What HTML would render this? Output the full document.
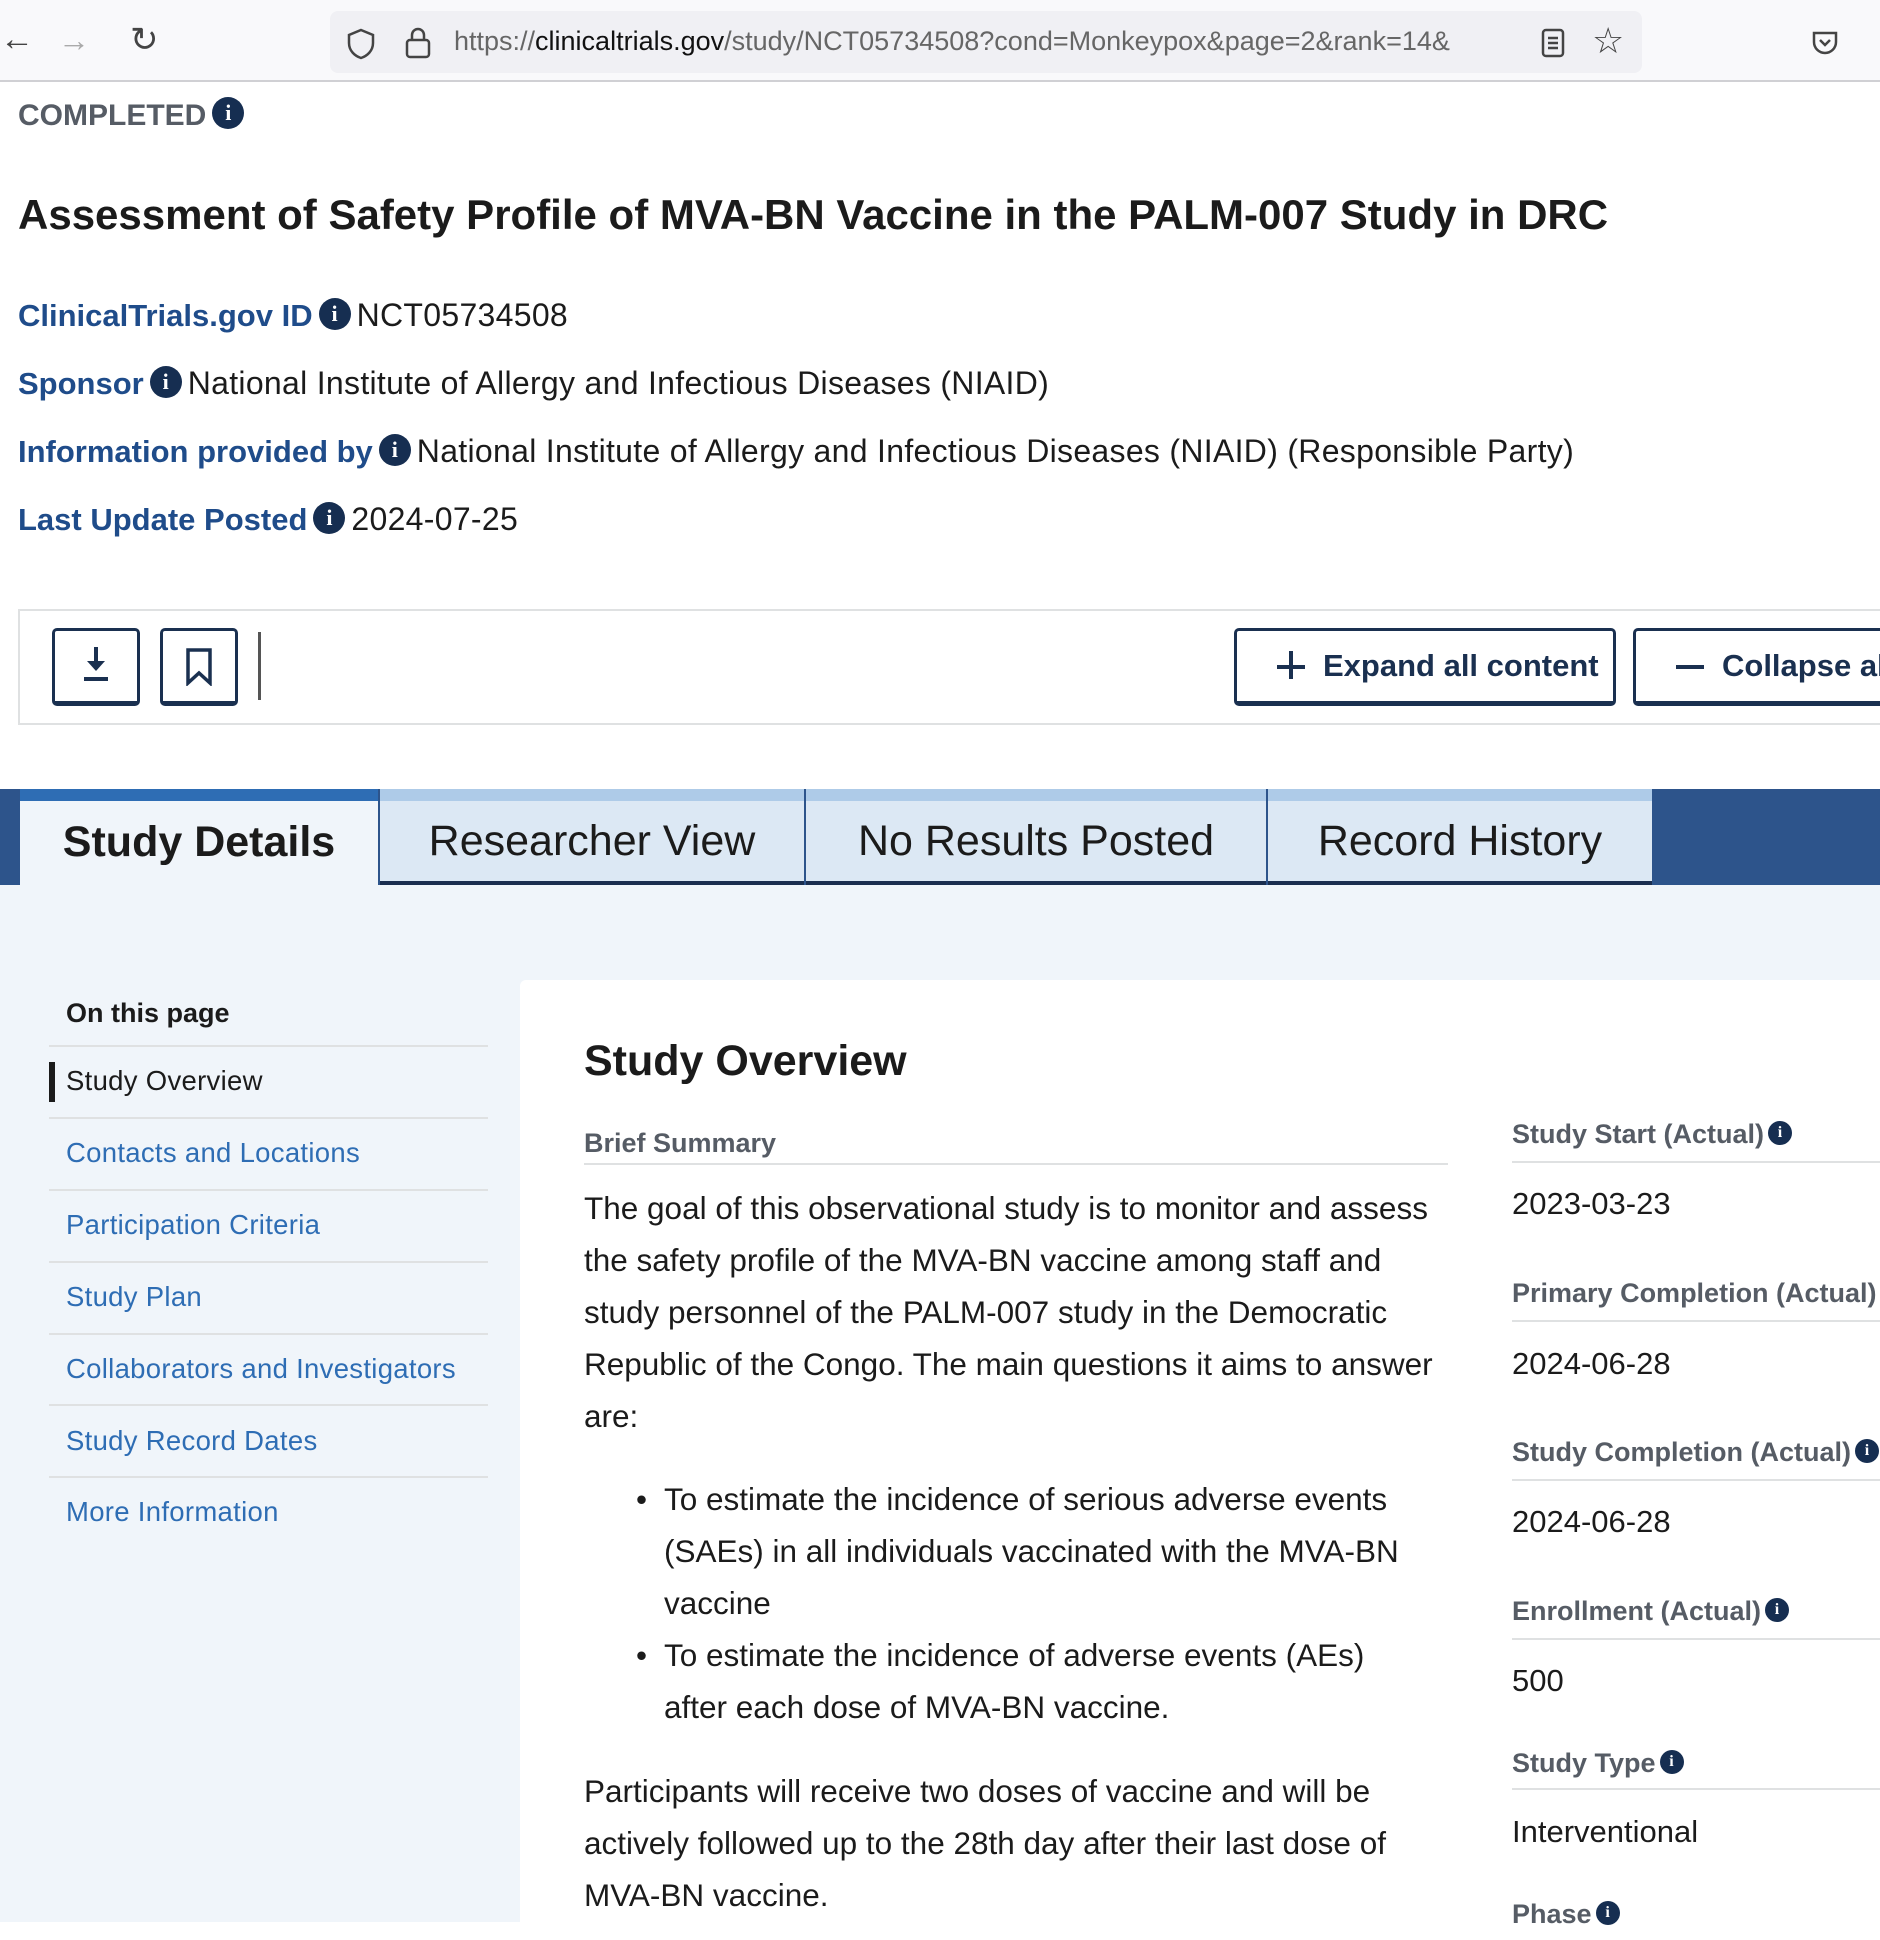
<!DOCTYPE html>
<html><head><meta charset="utf-8">
<style>
*{margin:0;padding:0;box-sizing:border-box}
body{width:1880px;height:1922px;overflow:hidden;background:#fff;font-family:"Liberation Sans",sans-serif;position:relative;color:#1b1b1b}
.a{position:absolute;white-space:nowrap}
.info{display:inline-block;width:32px;height:32px;border-radius:50%;background:#162e51;color:#fff;font:bold 22px/32px "Liberation Serif",serif;text-align:center;vertical-align:middle;margin:0 6px;position:relative;top:-4px}
.info.s{width:24px;height:24px;font-size:16px;line-height:24px;margin:0 4px;top:-3px}
.lbl{color:#1f4c8a;font-weight:bold;font-size:31px}
.val{font-size:32px;color:#1b1b1b;letter-spacing:0.3px}
.row{font-size:31px;line-height:40px}
.side{position:absolute;left:66px;font-size:27.5px;color:#2e6db4;line-height:40px;letter-spacing:0.3px}
.hr{position:absolute;height:2px;background:#dfe1e2}
.rl{position:absolute;left:1512px;font-size:27px;font-weight:bold;color:#565c65;line-height:36px;white-space:nowrap}
.rv{position:absolute;left:1512px;font-size:31px;line-height:40px}
.p{font-size:31.5px;line-height:52px}
</style></head><body>
<div class="a" style="left:0;top:0;width:1880px;height:82px;background:#f9f9fb;border-bottom:2px solid #d0d0d4"></div>
<div class="a" style="left:0;top:20px;font-size:34px;color:#444">&#8592;</div>
<div class="a" style="left:58px;top:22px;font-size:32px;color:#aaa">&#8594;</div>
<div class="a" style="left:130px;top:20px;font-size:34px;color:#444">&#8635;</div>
<div class="a" style="left:330px;top:11px;width:1312px;height:62px;background:#f0f0f4;border-radius:8px"></div>
<svg class="a" style="left:346px;top:28px" width="30" height="32" viewBox="0 0 30 32"><path d="M15 2 L27 7 V15 C27 23 21 28 15 30 C9 28 3 23 3 15 V7 Z" fill="none" stroke="#444" stroke-width="2.5"/></svg>
<svg class="a" style="left:404px;top:26px" width="28" height="34" viewBox="0 0 28 34"><rect x="3" y="14" width="22" height="17" rx="3" fill="none" stroke="#444" stroke-width="2.5"/><path d="M8 14 V9 a6 6 0 0 1 12 0 V14" fill="none" stroke="#444" stroke-width="2.5"/></svg>
<div class="a" style="left:454px;top:26px;font-size:27px;color:#666;width:1070px;overflow:hidden">https://<span style="color:#111">clinicaltrials.gov</span>/study/NCT05734508?cond=Monkeypox&amp;page=2&amp;rank=14&amp;</div>
<svg class="a" style="left:1540px;top:28px" width="26" height="30" viewBox="0 0 26 30"><rect x="3" y="2" width="20" height="26" rx="3" fill="none" stroke="#444" stroke-width="2.5"/><path d="M8 10h10M8 15h10M8 20h10" stroke="#444" stroke-width="2.5"/></svg>
<div class="a" style="left:1592px;top:20px;font-size:36px;color:#444">&#9734;</div>
<svg class="a" style="left:1810px;top:28px" width="30" height="30" viewBox="0 0 30 30"><path d="M4 5 H26 V14 a11 11 0 0 1 -22 0 Z" fill="none" stroke="#444" stroke-width="2.5"/><path d="M10 12 l5 5 l5 -5" fill="none" stroke="#444" stroke-width="2.5"/></svg>

<div class="a" style="left:18px;top:97px;font-size:30px;font-weight:bold;color:#565c65;line-height:38px">COMPLETED<span class="info">i</span></div>
<div class="a" style="left:18px;top:188px;font-size:42px;font-weight:bold;color:#1b1b1b;line-height:54px">Assessment of Safety Profile of MVA-BN Vaccine in the PALM-007 Study in DRC</div>
<div class="a row" style="left:18px;top:295px"><span class="lbl">ClinicalTrials.gov ID</span><span class="info">i</span><span class="val">NCT05734508</span></div>
<div class="a row" style="left:18px;top:363px"><span class="lbl">Sponsor</span><span class="info">i</span><span class="val">National Institute of Allergy and Infectious Diseases (NIAID)</span></div>
<div class="a row" style="left:18px;top:431px"><span class="lbl">Information provided by</span><span class="info">i</span><span class="val">National Institute of Allergy and Infectious Diseases (NIAID) (Responsible Party)</span></div>
<div class="a row" style="left:18px;top:499px"><span class="lbl">Last Update Posted</span><span class="info">i</span><span class="val">2024-07-25</span></div>

<div class="a" style="left:18px;top:609px;width:1880px;height:116px;border:2px solid #dfe1e2"></div>
<div class="a" style="left:52px;top:628px;width:88px;height:78px;border:3px solid #1a3050;border-radius:5px;border-bottom-width:5px"></div>
<svg class="a" style="left:80px;top:645px" width="32" height="40" viewBox="0 0 32 40"><path d="M16 2 V24" stroke="#1a3050" stroke-width="4"/><path d="M7 16 L16 26 L25 16 Z" fill="#1a3050"/><rect x="4" y="32" width="24" height="4" fill="#1a3050"/></svg>
<div class="a" style="left:160px;top:628px;width:78px;height:78px;border:3px solid #1a3050;border-radius:5px;border-bottom-width:5px"></div>
<svg class="a" style="left:184px;top:648px" width="30" height="38" viewBox="0 0 30 38"><path d="M4 2 H26 V35 L15 25 L4 35 Z" fill="none" stroke="#1a3050" stroke-width="3.5"/></svg>
<div class="a" style="left:258px;top:632px;width:3px;height:68px;background:#555"></div>
<div class="a" style="left:1234px;top:628px;width:382px;height:78px;border:3px solid #1a3050;border-radius:5px;border-bottom-width:5px;font-size:31px;font-weight:bold;color:#1a3050;line-height:70px"><span style="position:absolute;left:40px;top:34px;width:28px;height:4px;background:#1a3050"></span><span style="position:absolute;left:52px;top:20px;width:4px;height:28px;background:#1a3050"></span><span style="margin-left:86px">Expand all content</span></div>
<div class="a" style="left:1633px;top:628px;width:300px;height:78px;border:3px solid #1a3050;border-radius:5px;border-bottom-width:5px;font-size:31px;font-weight:bold;color:#1a3050;line-height:70px"><span style="position:absolute;left:40px;top:34px;width:28px;height:4px;background:#1a3050"></span><span style="margin-left:86px">Collapse all</span></div>

<div class="a" style="left:0;top:789px;width:1880px;height:96px;background:#2d548b"></div>
<div class="a" style="left:20px;top:789px;width:358px;height:96px;background:#f0f5fa;border-top:12px solid #2e6db4;font-size:43px;font-weight:bold;text-align:center;line-height:82px">Study Details</div>
<div class="a" style="left:380px;top:789px;width:424px;height:96px;background:#dce8f4;border-top:12px solid #aecbe8;border-bottom:4px solid #1a2e4f;font-size:43px;text-align:center;line-height:80px">Researcher View</div>
<div class="a" style="left:806px;top:789px;width:460px;height:96px;background:#dce8f4;border-top:12px solid #aecbe8;border-bottom:4px solid #1a2e4f;font-size:43px;text-align:center;line-height:80px">No Results Posted</div>
<div class="a" style="left:1268px;top:789px;width:384px;height:96px;background:#dce8f4;border-top:12px solid #aecbe8;border-bottom:4px solid #1a2e4f;font-size:43px;text-align:center;line-height:80px">Record History</div>

<div class="a" style="left:0;top:885px;width:1880px;height:1037px;background:#f0f5fa"></div>
<div class="a" style="left:66px;top:993px;font-size:27px;font-weight:bold;line-height:40px">On this page</div>
<div class="hr" style="left:49px;top:1045px;width:439px"></div>
<div class="a" style="left:49px;top:1062px;width:6px;height:40px;background:#1b1b1b"></div>
<div class="side" style="top:1061px;color:#1b1b1b">Study Overview</div>
<div class="hr" style="left:49px;top:1117px;width:439px"></div>
<div class="side" style="top:1133px">Contacts and Locations</div>
<div class="hr" style="left:49px;top:1189px;width:439px"></div>
<div class="side" style="top:1205px">Participation Criteria</div>
<div class="hr" style="left:49px;top:1261px;width:439px"></div>
<div class="side" style="top:1277px">Study Plan</div>
<div class="hr" style="left:49px;top:1333px;width:439px"></div>
<div class="side" style="top:1349px">Collaborators and Investigators</div>
<div class="hr" style="left:49px;top:1404px;width:439px"></div>
<div class="side" style="top:1421px">Study Record Dates</div>
<div class="hr" style="left:49px;top:1476px;width:439px"></div>
<div class="side" style="top:1492px">More Information</div>

<div class="a" style="left:520px;top:980px;width:1400px;height:960px;background:#fff;border-radius:6px"></div>
<div class="a" style="left:584px;top:1034px;font-size:43px;font-weight:bold;line-height:54px">Study Overview</div>
<div class="a" style="left:584px;top:1125px;font-size:27px;font-weight:bold;color:#565c65;line-height:36px">Brief Summary</div>
<div class="hr" style="left:584px;top:1163px;width:864px"></div>
<div class="a p" style="left:584px;top:1182px">The goal of this observational study is to monitor and assess<br>the safety profile of the MVA-BN vaccine among staff and<br>study personnel of the PALM-007 study in the Democratic<br>Republic of the Congo. The main questions it aims to answer<br>are:</div>
<div class="a p" style="left:636px;top:1473px">•</div>
<div class="a p" style="left:664px;top:1473px">To estimate the incidence of serious adverse events<br>(SAEs) in all individuals vaccinated with the MVA-BN<br>vaccine</div>
<div class="a p" style="left:636px;top:1629px">•</div>
<div class="a p" style="left:664px;top:1629px">To estimate the incidence of adverse events (AEs)<br>after each dose of MVA-BN vaccine.</div>
<div class="a p" style="left:584px;top:1765px">Participants will receive two doses of vaccine and will be<br>actively followed up to the 28th day after their last dose of<br>MVA-BN vaccine.</div>

<div class="rl" style="top:1116px">Study Start (Actual)<span class="info s">i</span></div>
<div class="hr" style="left:1512px;top:1161px;width:400px"></div>
<div class="rv" style="top:1184px">2023-03-23</div>
<div class="rl" style="top:1275px">Primary Completion (Actual)</div>
<div class="hr" style="left:1512px;top:1320px;width:400px"></div>
<div class="rv" style="top:1344px">2024-06-28</div>
<div class="rl" style="top:1434px">Study Completion (Actual)<span class="info s">i</span></div>
<div class="hr" style="left:1512px;top:1479px;width:400px"></div>
<div class="rv" style="top:1502px">2024-06-28</div>
<div class="rl" style="top:1593px">Enrollment (Actual)<span class="info s">i</span></div>
<div class="hr" style="left:1512px;top:1638px;width:400px"></div>
<div class="rv" style="top:1661px">500</div>
<div class="rl" style="top:1745px">Study Type<span class="info s">i</span></div>
<div class="hr" style="left:1512px;top:1788px;width:400px"></div>
<div class="rv" style="top:1812px">Interventional</div>
<div class="rl" style="top:1896px">Phase<span class="info s">i</span></div>
</body></html>
